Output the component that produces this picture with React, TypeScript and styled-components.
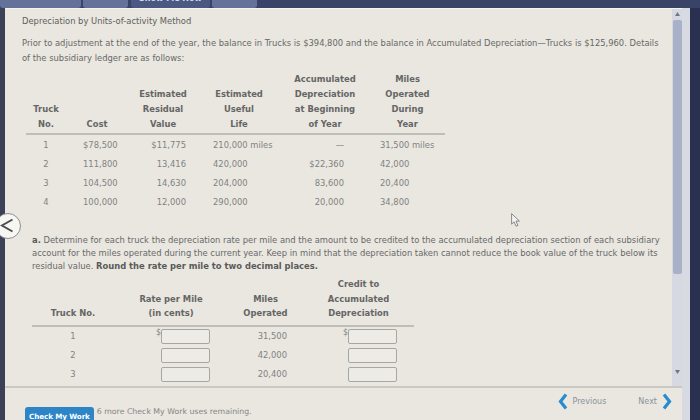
import React from "react";
import styled, { createGlobalStyle } from "styled-components";

const Global = createGlobalStyle`
  html, body { margin: 0; padding: 0; width: 700px; height: 420px; overflow: hidden; background: #2e3656; }
  #root { width: 700px; height: 420px; }
`;

const Screen = styled.div`
  position: relative;
  width: 700px;
  height: 420px;
  display: flex;
  flex-direction: column;
  overflow: hidden;
  background: #2e3656;
  font-family: "DejaVu Sans", Verdana, sans-serif;
  font-size: 8.4px;
  color: #666;
`;

const TabBar = styled.div`
  height: 8px;
  flex: none;
  display: flex;
  background: #394368;
`;

const Tab = styled.div<{ $w: number; $gap: number; $active?: boolean }>`
  width: ${(p) => p.$w}px;
  margin-left: ${(p) => p.$gap}px;
  background: ${(p) => (p.$active ? "#4b5882" : "#64729a")};
  border-radius: 0 0 3px 3px;
  display: flex;
  justify-content: center;
  align-items: flex-end;
  overflow: hidden;
`;

const TabLabel = styled.span`
  color: #d9deea;
  font-weight: bold;
  font-size: 8px;
  line-height: 8px;
  padding-bottom: 5px;
  white-space: nowrap;
`;

const Frame = styled.div`
  flex: 1;
  display: flex;
  min-height: 0;
`;

const LeftRail = styled.div`
  width: 5px;
  flex: none;
  background: #3b4159;
`;

const Panel = styled.div`
  flex: 1;
  min-width: 0;
  display: flex;
  flex-direction: column;
  background: #e9e7e0;
  border-top: 1px solid #f4f3ef;
`;

const Edge = styled.div`
  width: 8px;
  flex: none;
  background: #d8dae1;
`;

const RightRail = styled.div`
  width: 10px;
  flex: none;
  background: #2a3150;
`;

const ScrollArea = styled.div`
  height: 377px;
  flex: none;
  display: flex;
`;

const Content = styled.div`
  flex: 1;
  min-width: 0;
  overflow: hidden;
  padding: 5px 0 0 17px;
`;

const Scrollbar = styled.div`
  width: 10px;
  flex: none;
  background: #d6d9e1;
  display: flex;
  flex-direction: column;
  align-items: center;
  padding: 3px 0 12px;
  box-sizing: border-box;
`;

const Thumb = styled.div`
  width: 9px;
  height: 254px;
  margin-top: 4px;
  border-radius: 2px;
  background: #a8b1c7;
`;

const Spacer = styled.div`
  flex: 1;
`;

const Title = styled.div`
  line-height: 14px;
  color: #5d5d5d;
  white-space: nowrap;
`;

const Paragraph = styled.p<{ $lh: number; $top: number; $indent?: number }>`
  margin: ${(p) => p.$top}px 0 0 ${(p) => p.$indent ?? 0}px;
  line-height: ${(p) => p.$lh}px;
  color: #686868;
  white-space: nowrap;
`;

const Strong = styled.b`
  color: #5a5a5a;
`;

const Grid = styled.div<{ $cols: string; $top: number; $indent: number }>`
  display: grid;
  grid-template-columns: ${(p) => p.$cols};
  width: max-content;
  margin: ${(p) => p.$top}px 0 0 ${(p) => p.$indent}px;
`;

const HeadCell = styled.div<{ $lh: number; $pb: number }>`
  display: flex;
  flex-direction: column;
  justify-content: flex-end;
  align-items: center;
  text-align: center;
  font-weight: bold;
  color: #656565;
  line-height: ${(p) => p.$lh}px;
  padding-bottom: ${(p) => p.$pb}px;
  border-bottom: 2px solid #bfbeb8;
  white-space: nowrap;
`;

const Cell = styled.div<{ $align: "left" | "right" | "center"; $pad: number; $h: number }>`
  height: ${(p) => p.$h}px;
  display: flex;
  align-items: center;
  justify-content: ${(p) =>
    p.$align === "left" ? "flex-start" : p.$align === "right" ? "flex-end" : "center"};
  padding-left: ${(p) => (p.$align === "left" ? p.$pad : 0)}px;
  padding-right: ${(p) => (p.$align === "right" ? p.$pad : 0)}px;
  color: #828282;
  white-space: nowrap;
`;

const Dollar = styled.span`
  color: #858585;
  font-size: 8px;
  line-height: 10px;
  margin-right: 0;
  align-self: flex-start;
  margin-top: 1px;
`;

const Input = styled.div`
  width: 49px;
  height: 15px;
  box-sizing: border-box;
  border: 1.5px solid #a6a6a4;
  border-radius: 2px;
  background: #ecebe6;
`;

const Divider = styled.div`
  height: 2px;
  flex: none;
  background: #c9c8c2;
`;

const Footer = styled.div`
  flex: 1;
  display: flex;
  justify-content: space-between;
  align-items: flex-start;
  padding: 0 10px 0 20px;
`;

const CheckGroup = styled.div`
  display: flex;
  align-items: flex-start;
  margin-top: 19px;
  gap: 3px;
`;

const CheckButton = styled.div`
  background: #2d84c6;
  color: #fff;
  font-weight: bold;
  font-size: 7.2px;
  line-height: 10px;
  padding: 5px 4px 6px;
  border-radius: 3px 3px 0 0;
  white-space: nowrap;
  letter-spacing: -0.1px;
`;

const UsesNote = styled.span`
  color: #858585;
  font-size: 7.8px;
  line-height: 10px;
  white-space: nowrap;
`;

const Pager = styled.div`
  display: flex;
  align-items: center;
  height: 17px;
  margin-top: 5px;
`;

const PagerLink = styled.span<{ $gap: number }>`
  color: #8d919b;
  font-size: 8px;
  margin: 0 ${(p) => p.$gap}px;
  white-space: nowrap;
`;

const PagerSpace = styled.div`
  width: 22px;
`;

const SideNav = styled.div`
  position: absolute;
  left: -5px;
  top: 213px;
  width: 26px;
  height: 26px;
  box-sizing: border-box;
  border-radius: 50%;
  border: 1.5px solid #8f8f8f;
  background: #f6f6f3;
`;

const Pointer = styled.svg`
  position: absolute;
  left: 511px;
  top: 213px;
`;

const Chevron = ({ dir }: { dir: "left" | "right" }) => (
  <svg width="10" height="17" viewBox="0 0 10 17">
    <path
      d={dir === "left" ? "M8 1.5 L2.5 8.5 L8 15.5" : "M2 1.5 L7.5 8.5 L2 15.5"}
      fill="none"
      stroke="#2a8bd0"
      strokeWidth="3.2"
    />
  </svg>
);

const Arrow = ({ up }: { up: boolean }) => (
  <svg width="5" height="4" viewBox="0 0 5 4">
    <path d={up ? "M0 4 L2.5 0 L5 4 Z" : "M0 0 L2.5 4 L5 0 Z"} fill="#6f7687" />
  </svg>
);

type Align = "left" | "right" | "center";

const t1Cols = [
  { w: 40, head: ["Truck", "No."], align: "center" as Align, pad: 0 },
  { w: 62, head: ["Cost"], align: "left" as Align, pad: 17 },
  { w: 70, head: ["Estimated", "Residual", "Value"], align: "right" as Align, pad: 12 },
  { w: 82, head: ["Estimated", "Useful", "Life"], align: "left" as Align, pad: 15 },
  { w: 90, head: ["Accumulated", "Depreciation", "at Beginning", "of Year"], align: "right" as Align, pad: 26 },
  { w: 75, head: ["Miles", "Operated", "During", "Year"], align: "left" as Align, pad: 10 },
];

const t1Rows = [
  ["1", "$78,500", "$11,775", "210,000 miles", "\u2014", "31,500 miles"],
  ["2", "111,800", "13,416", "420,000", "$22,360", "42,000"],
  ["3", "104,500", "14,630", "204,000", "83,600", "20,400"],
  ["4", "100,000", "12,000", "290,000", "20,000", "34,800"],
];

const t2Cols = [
  { w: 82, head: ["Truck No."], align: "center" as Align, pad: 0 },
  { w: 114, head: ["Rate per Mile", "(in cents)"], align: "right" as Align, pad: 18 },
  { w: 75, head: ["Miles", "Operated"], align: "right" as Align, pad: 16 },
  { w: 111, head: ["Credit to", "Accumulated", "Depreciation"], align: "right" as Align, pad: 17 },
];

const t2Rows = [
  { no: "1", miles: "31,500" },
  { no: "2", miles: "42,000" },
  { no: "3", miles: "20,400" },
];

const AnswerField = ({ first }: { first: boolean }) => (
  <>
    {first && <Dollar>$</Dollar>}
    <Input />
  </>
);

export default function App() {
  return (
    <Screen>
      <Global />
      <TabBar>
        <Tab $w={81} $gap={0} />
        <Tab $w={45} $gap={2} />
        <Tab $w={79} $gap={3} $active>
          <TabLabel>Show Me How</TabLabel>
        </Tab>
        <Tab $w={45} $gap={2} />
      </TabBar>
      <Frame>
        <LeftRail />
        <Panel>
          <ScrollArea>
            <Content>
              <Title>Depreciation by Units-of-activity Method</Title>
              <Paragraph $lh={15} $top={8}>
                Prior to adjustment at the end of the year, the balance in Trucks is $394,800 and the balance in
                Accumulated Depreciation—Trucks is $125,960. Details
                <br />
                of the subsidiary ledger are as follows:
              </Paragraph>

              <Grid $cols={t1Cols.map((c) => `${c.w}px`).join(" ")} $top={6} $indent={4}>
                {t1Cols.map((c, i) => (
                  <HeadCell key={`h${i}`} $lh={15} $pb={1}>
                    {c.head.map((l) => (
                      <span key={l}>{l}</span>
                    ))}
                  </HeadCell>
                ))}
                {t1Rows.map((row, r) =>
                  row.map((v, i) => (
                    <Cell key={`${r}-${i}`} $align={t1Cols[i].align} $pad={t1Cols[i].pad} $h={19}>
                      {v}
                    </Cell>
                  ))
                )}
              </Grid>

              <Paragraph $lh={13} $top={23} $indent={10}>
                <Strong>a.</Strong> Determine for each truck the depreciation rate per mile and the amount to be
                credited to the accumulated depreciation section of each subsidiary
                <br />
                account for the miles operated during the current year. Keep in mind that the depreciation taken
                cannot reduce the book value of the truck below its
                <br />
                residual value. <Strong>Round the rate per mile to two decimal places.</Strong>
              </Paragraph>

              <Grid $cols={t2Cols.map((c) => `${c.w}px`).join(" ")} $top={4} $indent={10}>
                {t2Cols.map((c, i) => (
                  <HeadCell key={`g${i}`} $lh={14.5} $pb={4}>
                    {c.head.map((l) => (
                      <span key={l}>{l}</span>
                    ))}
                  </HeadCell>
                ))}
                {t2Rows.map((row, r) => (
                  <React.Fragment key={row.no}>
                    <Cell $align="center" $pad={0} $h={19}>
                      {row.no}
                    </Cell>
                    <Cell $align="right" $pad={18} $h={19}>
                      <AnswerField first={r === 0} />
                    </Cell>
                    <Cell $align="right" $pad={16} $h={19}>
                      {row.miles}
                    </Cell>
                    <Cell $align="right" $pad={17} $h={19}>
                      <AnswerField first={r === 0} />
                    </Cell>
                  </React.Fragment>
                ))}
              </Grid>
            </Content>
            <Scrollbar>
              <Arrow up />
              <Thumb />
              <Spacer />
              <Arrow up={false} />
            </Scrollbar>
          </ScrollArea>
          <Divider />
          <Footer>
            <CheckGroup>
              <CheckButton>Check My Work</CheckButton>
              <UsesNote>6 more Check My Work uses remaining.</UsesNote>
            </CheckGroup>
            <Pager>
              <Chevron dir="left" />
              <PagerLink $gap={5}>Previous</PagerLink>
              <PagerSpace />
              <PagerLink $gap={5}>Next</PagerLink>
              <Chevron dir="right" />
            </Pager>
          </Footer>
        </Panel>
        <Edge />
        <RightRail />
      </Frame>

      <SideNav>
        <svg width="23" height="23" viewBox="0 0 23 23">
          <path d="M16.5 5.5 L6 11.5 L16.5 17.5" fill="none" stroke="#4d4d4d" strokeWidth="2" />
        </svg>
      </SideNav>
      <Pointer width="10" height="15" viewBox="0 0 10 15">
        <path
          d="M0.6 0.6 L0.6 11.2 L3.1 8.8 L5 13.2 L6.9 12.4 L5 8.1 L8.4 8.1 Z"
          fill="#f3f3f1"
          stroke="#707070"
          strokeWidth="0.8"
        />
      </Pointer>
    </Screen>
  );
}
